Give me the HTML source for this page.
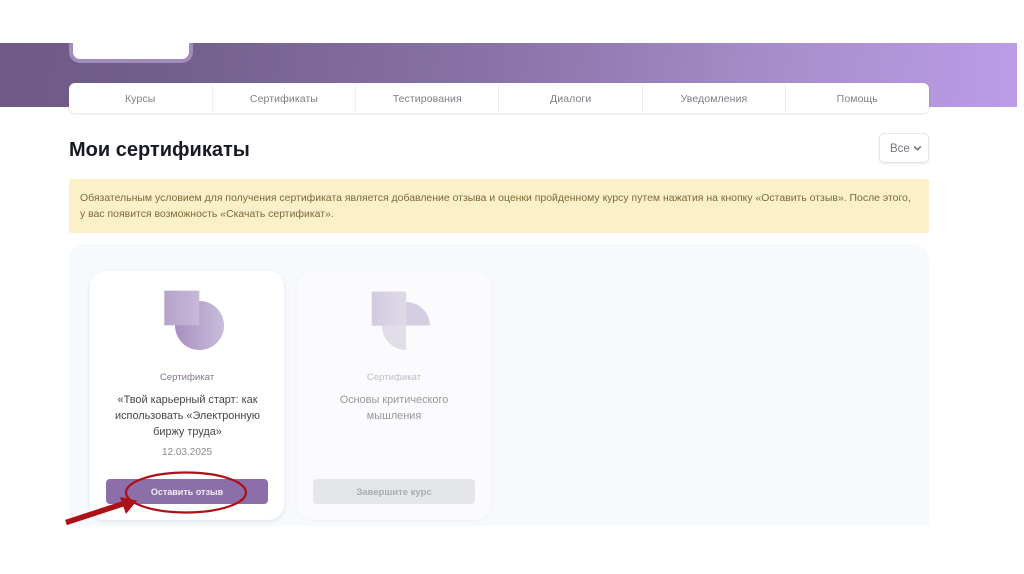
<!DOCTYPE html>
<html lang="ru">
<head>
<meta charset="utf-8">
<title>Мои сертификаты</title>
<style>
html,body{margin:0;padding:0;background:#fff}
body{width:1024px;height:574px;position:relative;overflow:hidden;font-family:"Liberation Sans",sans-serif}
.a{position:absolute}
.c{text-align:center;white-space:nowrap}
.banner{left:0;top:43px;width:1017px;height:64px;background:linear-gradient(95deg,#6e5a84 0%,#725e8a 15%,#8a74a8 50%,#a58dc9 75%,#bb9ce8 100%)}
.logo{left:69px;top:43px;width:116px;height:16px;background:#fff;border:4px solid #a28cbc;border-top:0;border-radius:0 0 11px 11px}
.tabs{left:69px;top:83px;width:860px;height:30px;background:#fff;border-radius:6px;box-shadow:0 1px 2px rgba(90,90,110,.18)}
.tab{top:1px;height:30px;width:143.33px;line-height:30px;font-size:10.5px;color:#7d7d84;letter-spacing:.1px}
.sep{top:1px;width:1px;height:28px;background:#eeeef0}
h1{margin:0;left:69px;top:138px;font-size:20px;line-height:24px;font-weight:700;color:#171a24;white-space:nowrap}
.filter{left:879px;top:133px;width:48px;height:28px;border:1px solid #e3e4e7;border-radius:5px;background:#fff;box-shadow:0 1px 2px rgba(90,90,110,.12)}
.alert{left:69px;top:179px;width:860px;height:54px;background:#fdf0c8;border-radius:2px}
.alert div{position:absolute;left:11px;font-size:10.46px;line-height:16px;color:#7b6a3a;white-space:nowrap}
.panel{left:69px;top:244px;width:860px;height:282px;background:#f7fafd;border-radius:16px 16px 0 0}
.card{top:271px;width:194px;height:249px;border-radius:16px;background:#fff;box-shadow:0 2px 6px rgba(100,100,130,.14)}
.card2{background:#fbfbfe;box-shadow:0 1px 4px rgba(100,100,130,.06)}
.lbl{font-size:9.6px;line-height:12px;width:194px}
.ttl{font-size:10.9px;line-height:16px;width:194px}
.btn{height:25px;width:162px;border-radius:4px;line-height:25px;font-size:9px;font-weight:700}
</style>
</head>
<body>
<div class="a banner"></div>
<div class="a logo"></div>

<div class="a tabs">
  <div class="a tab c" style="left:-0.5px">Курсы</div>
  <div class="a tab c" style="left:143.3px">Сертификаты</div>
  <div class="a tab c" style="left:286.6px">Тестирования</div>
  <div class="a tab c" style="left:430px">Диалоги</div>
  <div class="a tab c" style="left:573.3px">Уведомления</div>
  <div class="a tab c" style="left:716.6px">Помощь</div>
  <div class="a sep" style="left:143px"></div>
  <div class="a sep" style="left:286px"></div>
  <div class="a sep" style="left:429px"></div>
  <div class="a sep" style="left:573px"></div>
  <div class="a sep" style="left:716px"></div>
</div>

<h1 class="a">Мои сертификаты</h1>

<div class="a filter">
  <div class="a" style="left:10px;top:1px;line-height:28px;font-size:11.5px;color:#77777e">Все</div>
  <svg class="a" style="left:33px;top:11px" width="9" height="7" viewBox="0 0 9 7"><path d="M1.2 1.5 L4.5 4.8 L7.8 1.5" fill="none" stroke="#66666e" stroke-width="1.4"/></svg>
</div>

<div class="a alert">
  <div style="top:12px">Обязательным условием для получения сертификата является добавление отзыва и оценки пройденному курсу путем нажатия на кнопку «Оставить отзыв». После этого,</div>
  <div style="top:28px">у вас появится возможность «Скачать сертификат».</div>
</div>

<div class="a panel"></div>

<div class="a card" style="left:90px"></div>
<svg class="a" style="left:160px;top:286px" width="70" height="70" viewBox="160 286 70 70">
  <defs>
    <linearGradient id="g1" x1="0" x2="1" y1="0" y2="0"><stop offset="0" stop-color="#a78fc0"/><stop offset="1" stop-color="#c9bddb"/></linearGradient>
    <linearGradient id="g3" x1="0" x2="1" y1="0" y2="0"><stop offset="0" stop-color="#b5a2cb"/><stop offset="1" stop-color="#c6b9d9"/></linearGradient>
  </defs>
  <circle cx="199.5" cy="325.5" r="24.5" fill="url(#g1)"/>
  <rect x="164.3" y="290.7" width="35" height="34.6" fill="url(#g3)"/>
</svg>
<div class="a lbl c" style="left:90px;top:372px;color:#84748f">Сертификат</div>
<div class="a ttl c" style="left:90.5px;top:392px;color:#45454b">«Твой карьерный старт: как<br>использовать «Электронную<br>биржу труда»</div>
<div class="a c" style="left:90px;top:446px;width:194px;font-size:10px;line-height:13px;color:#8a8a90">12.03.2025</div>
<div class="a" style="left:106px;top:479px;width:162px;height:25px;border-radius:4px;background:#8c6fa9"></div>
<div class="a btn c" style="left:106px;top:480px;color:#f1edf5">Оставить отзыв</div>

<div class="a card card2" style="left:297px"></div>
<svg class="a" style="left:368px;top:286px" width="70" height="70" viewBox="368 286 70 70">
  <defs>
    <linearGradient id="g2" x1="0" x2="1" y1="0" y2="0"><stop offset="0" stop-color="#d3cbe0"/><stop offset="1" stop-color="#dfdae8"/></linearGradient>
  </defs>
  <path d="M406 302 A24 24 0 0 1 430 325.5 L406 325.5 Z" fill="#d5cde2"/>
  <path d="M382 325.5 L406 325.5 L406 350 A24 24 0 0 1 382 325.5 Z" fill="#e1deea"/>
  <rect x="371.7" y="291.5" width="34.6" height="34.2" fill="url(#g2)"/>
</svg>
<div class="a lbl c" style="left:297px;top:372px;color:#c0bcc8">Сертификат</div>
<div class="a ttl c" style="left:297px;top:392px;color:#97979f">Основы критического<br>мышления</div>
<div class="a" style="left:313px;top:479px;width:162px;height:25px;border-radius:4px;background:#e4e6ea"></div>
<div class="a btn c" style="left:313px;top:480px;color:#a9abb2;font-size:9.5px">Завершите курс</div>

<svg class="a" style="left:0;top:0;z-index:3" width="1024" height="574" viewBox="0 0 1024 574">
  <ellipse cx="186" cy="492.5" rx="60" ry="20" fill="none" stroke="#ae1018" stroke-width="2.2"/>
  <path d="M66 522.5 L124 503.5" stroke="#ae1018" stroke-width="5.5" fill="none"/>
  <path d="M137 500.5 L120 497 L126 514 Z" fill="#ae1018"/>
</svg>
</body>
</html>
